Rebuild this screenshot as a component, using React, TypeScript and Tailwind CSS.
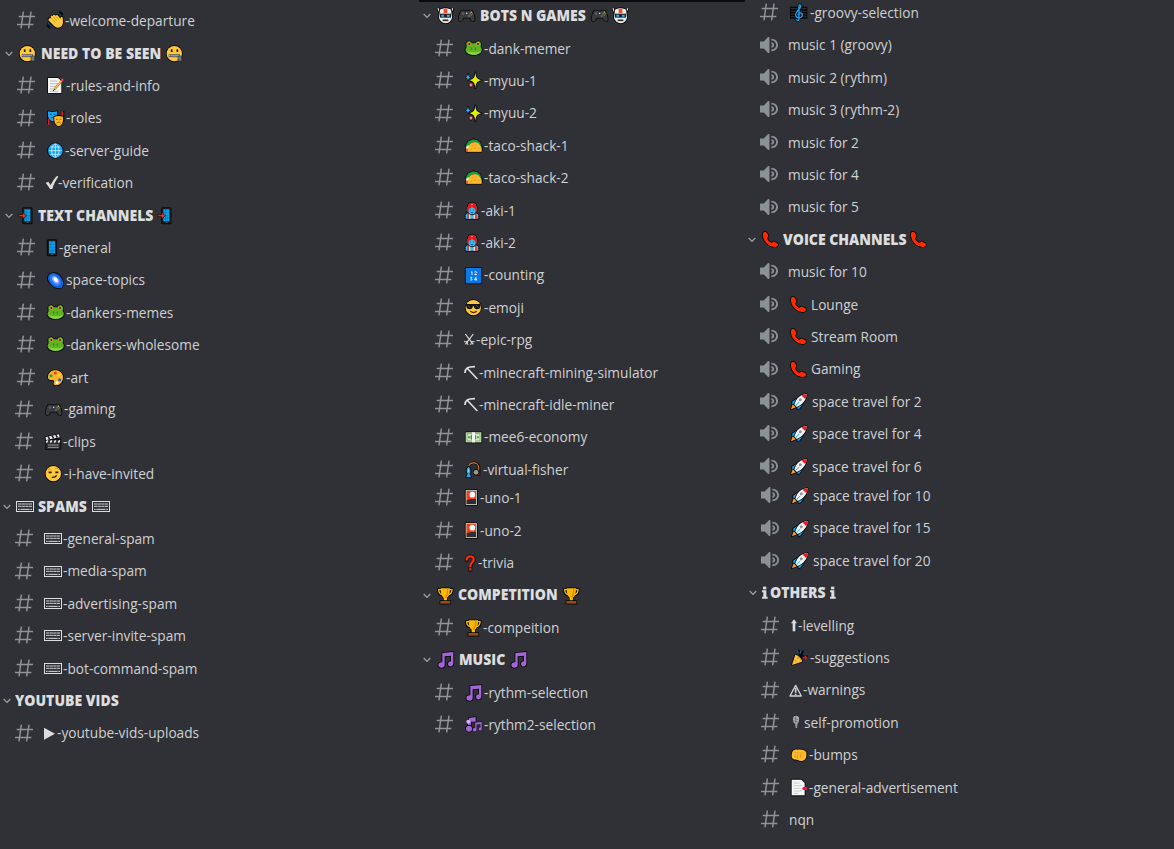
import React from "react";

const O = "#08080a";
const TXT = "#dcddde";

/* Every glyph is drawn on a 54-unit grid and shown 18px wide. */
const ol = { stroke: O, strokeWidth: 5, strokeLinejoin: "round" as const, strokeLinecap: "round" as const, paintOrder: "stroke" as const };

const Frog = () => (
  <g>
    <path {...ol} d="M4 12C4 6 9 3 13 4c4 0 6 3 7 6h12c1-3 3-6 7-6 4-1 9 2 9 8l-1 9c3 4 4 8 3 12-3 8-13 12-24 12S5 41 2 33c-1-4 0-8 3-12z" fill="#5fb321" />
    <path d="M4 33c8 5 36 5 44 0-3 7-12 11-22 11S7 40 4 33z" fill="#8bd448" />
    <circle cx="13" cy="12" r="5.5" fill="#f0a020" /><circle cx="39" cy="12" r="5.5" fill="#f0a020" />
    <circle cx="13" cy="12" r="3" fill="#1a1a1a" /><circle cx="39" cy="12" r="3" fill="#1a1a1a" />
    <path d="M20 23v6M31 23v6" stroke="#2c7a1c" strokeWidth="3" />
  </g>
);

const Pad = () => (
  <g>
    <path {...ol} d="M10 12c5-3 9-1 12 1h8c3-2 7-4 12-1 4 3 8 18 8 25 0 6-7 8-11 1l-4-6H17l-4 6C9 45 2 43 2 37c0-7 4-22 8-25z" fill="#3b3b3d" />
    <circle cx="15" cy="20" r="4" fill="#5c5c60" /><circle cx="33" cy="27" r="4" fill="#5c5c60" />
    <rect x="24" y="17" width="4" height="4" fill="#cfcfcf" />
    <circle cx="40" cy="16" r="2.4" fill="#e0b020" /><circle cx="44" cy="20" r="2.4" fill="#e03a20" />
    <circle cx="36" cy="20" r="2.4" fill="#1d87d8" /><circle cx="40" cy="24" r="2.4" fill="#25a35a" />
  </g>
);

const Face = ({ children }: { children: React.ReactNode }) => (
  <g><circle {...ol} cx="25" cy="26" r="23" fill="#ffc83d" />{children}</g>
);

const Phone = () => (
  <path {...ol} d="M3 7c2-5 9-6 12-1l4 8c1 4-3 5-4 8 2 6 7 11 13 14 3-1 5-6 9-4l9 5c4 3 2 9-3 10C25 52 0 32 3 7z" fill="#ff2a00" />
);

const Trophy = () => (
  <g>
    <path d="M12 8H4c0 10 4 15 11 16M38 8h8c0 10-4 15-11 16" stroke={O} strokeWidth="8" fill="none" />
    <path {...ol} d="M11 4h28c0 14-2 24-9 28v9h-10v-9C13 28 11 18 11 4z" fill="#fdb900" />
    <path d="M12 8H5c0 9 4 13 10 15M38 8h7c0 9-4 13-10 15" stroke="#fdb900" strokeWidth="4" fill="none" />
    <path d="M32 5c0 12-1 22-7 26" stroke="#d98a00" strokeWidth="4" fill="none" />
    <rect {...ol} x="10" y="42" width="30" height="8" fill="#9a4a12" />
  </g>
);

const Mobile = ({ x = 2 }: { x?: number }) => (
  <g transform={`translate(${x} 0)`}>
    <rect {...ol} x="0" y="3" width="26" height="46" rx="2" fill="#1c1c1e" />
    <rect x="4" y="7" width="18" height="36" fill="#00a6f4" />
    <path d="M4 16h18M4 25h18M4 34h18M10 7v36M16 25v18" stroke="#0b6aa6" strokeWidth="1.6" />
    <path d="M10 46h7" stroke="#666" strokeWidth="2" />
  </g>
);

const Keyboard = () => (
  <g>
    <rect x="1.5" y="10.5" width="51" height="30" fill="none" stroke={TXT} strokeWidth="3" />
    <path d="M6 18h42M6 25h42" stroke={TXT} strokeWidth="2.8" strokeDasharray="10 .8" />
    <path d="M6 34h5M13 34h28M43 34h5" stroke={TXT} strokeWidth="3" />
  </g>
);

const Note = ({ s = 1, x = 0, y = 0 }: { s?: number; x?: number; y?: number }) => (
  <g transform={`translate(${x} ${y}) scale(${s})`}>
    <path {...ol} d="M16 6l33-3v34c0 12-16 12-16 2 0-6 5-8 9-8V14l-19 2v26c0 11-19 11-19 0 0-6 6-9 12-8z" fill="#a465d8" />
  </g>
);

const Taco = () => (
  <g>
    <path {...ol} d="M2 38C1 18 12 9 21 9c3-4 7-2 9 0 5-2 8 0 9 4 6 0 8 6 9 12l3 9-2 10H4z" fill="#1d9e3c" />
    <path d="M3 31l7-7 4 6-5 13H4z" fill="#f4f0e6" /><path d="M3 34l6 1v9H4z" fill="#e8402a" />
    <path d="M8 44C8 25 18 16 29 16c13 0 21 12 21 28z" fill="#fcb92c" />
    <path d="M20 15l4 4 4-5z" fill="#ef4a38" />
    <path d="M22 26h3M32 24h3M28 33h3M39 34h3M18 36h3" stroke="#d8860e" strokeWidth="3" />
  </g>
);

const Sparkles = () => (
  <g>
    <path {...ol} d="M31 1c1.500 15 4 21 19 24-15 2-17.500 10-19 24-1.500-14-4-22-19-24 15-3 17.500-9 19-24z" fill="#e2f000" />
    <path {...ol} strokeWidth={3} d="M9 5c1 6 2 9 7 11-5 2-6 5-7 11-1-6-2-9-7-11 5-2 6-5 7-11z" fill="#20b8ff" />
    <path {...ol} strokeWidth={3} d="M18 30c1 5 3 8 7 9-4 1-6 4-7 9-1-5-3-8-7-9 4-1 6-4 7-9z" fill="#ff7f9c" />
  </g>
);

const Genie = () => (
  <g>
    <path {...ol} d="M2 50V40c0-4 5-6 9-6h20c5 0 9 2 9 6v10z" fill="#2fc3f4" />
    <path d="M6 50V38l6-3 2 15zM36 50V38l-6-3-2 15z" fill="#f33238" />
    <path d="M12 50V36h4v14zM26 50V36h4v14z" fill="#f4e8c0" />
    <path {...ol} d="M8 20C8 8 13 2 21 2s14 6 14 18c0 9-6 17-14 17S8 29 8 20z" fill="#2fc3f4" />
    <path d="M8 22C7 8 13 2 21 2s15 6 14 20c-5 0-10-4-14-7-4 3-9 7-13 7z" fill="#ef1320" />
    <path d="M9 15v16M33 15v16" stroke="#ef1320" strokeWidth="3.5" />
    <circle cx="21" cy="8" r="2" fill="#ffc83d" />
    <path d="M16 22v3M26 22v3M17 31h8" stroke="#0a3f66" strokeWidth="2.6" />
  </g>
);

const Card = () => (
  <g>
    <rect {...ol} x="2" y="3" width="34" height="45" rx="1" fill="#b9b9b9" />
    <rect x="5" y="6" width="28" height="39" fill="#ff3a12" />
    <circle cx="22" cy="17" r="8.5" fill="#fff" />
    <path d="M5 34c8-4 18-5 28-4v15H5z" fill="#2e2e2e" />
  </g>
);

const Rocket = () => (
  <g>
    <path {...ol} d="M3 49l5-16 10 10z" fill="#ff9a1a" />
    <path {...ol} d="M6 27l12-9 20 15-9 13-6 3-2-10-6-6-8-1z" fill="#12a2f2" />
    <path {...ol} d="M13 35C18 16 32 4 50 3c0 17-12 31-30 39z" fill="#f3f3f3" />
    <path d="M35 8c5-3 10-4 15-5 0 6-1 11-4 15z" fill="#f7111d" />
    <circle cx="31" cy="20" r="4.5" fill="#8f959c" />
    <path d="M16 38l12-11" stroke="#12a2f2" strokeWidth="3" />
  </g>
);

const InfoMark = () => (
  <g fill={TXT}><rect x="3" y="8" width="10" height="8" /><path d="M0 19h13v19h4v6H0v-6h4V25H0z" /></g>
);

const Pick = () => (
  <g fill="none" stroke={TXT}>
    <path d="M3 27C3 14 9 8 33 8" strokeWidth="5" /><path d="M9 12l31 33" strokeWidth="5" />
  </g>
);

const icons: Record<string, React.ReactNode> = {
  wave: (
    <g>
      <path d="M32 4c5 0 9 4 11 8M36 0c5 1 9 4 11 9M4 30c0 6 3 11 8 14M1 38c2 6 5 9 9 10" stroke={O} strokeWidth="6" fill="none" />
      <path {...ol} d="M6 20c2-4 5-2 7 0l-2-6c0-4 5-4 7-1-1-5 5-6 8-2 2-3 6-2 8 1l6 8c0-6 6-8 7-3 1 7 2 16-1 22-5 9-17 11-24 4L7 28c-3-3-3-6-1-8z" fill="#ffc83d" />
      <path d="M13 20l11 11M18 14l11 12M26 12l9 11" stroke="#d99410" strokeWidth="2.4" />
      <path d="M32 4c5 0 8 3 10 7M4 31c1 6 3 9 8 12" stroke="#0f7fb4" strokeWidth="3" fill="none" />
    </g>
  ),
  zip: (
    <Face>
      <path d="M17 13v8M34 13v8" stroke="#2a1c08" strokeWidth="5" />
      <path d="M8 32h34" stroke="#5d6168" strokeWidth="9" /><path d="M9 32h32" stroke="#c2c6ca" strokeWidth="3" strokeDasharray="4 2.4" />
      <rect x="36" y="33" width="11" height="15" rx="3" fill="#777b80" stroke="#303236" strokeWidth="2" />
    </Face>
  ),
  memo: (
    <g>
      <path {...ol} d="M3 3h30l10 9v36H3z" fill="#f4f4f4" />
      <path d="M9 12h22M9 20h26M9 28h20M9 36h12M9 43h24" stroke="#b4b4b4" strokeWidth="2.5" />
      <path d="M45 10L23 36" stroke="#6b5a35" strokeWidth="6" /><path d="M45 10L23 36" stroke="#ffc02e" strokeWidth="4.500" />
      <path d="M48 6l-5 6" stroke="#f0334a" strokeWidth="7" /><path d="M23 36l-4 6" stroke="#333" strokeWidth="3" />
    </g>
  ),
  masks: (
    <g>
      <path d="M4 6v36M48 3v32" stroke={O} strokeWidth="8" /><path d="M5 24v20M46 4v26" stroke="#f01828" strokeWidth="5" />
      <path {...ol} d="M3 4c9 3 18 3 27 0 1 16 0 26-13 30C4 30 2 20 3 4z" fill="#18a7f2" />
      <path d="M9 13h5M20 13h5" stroke="#07486e" strokeWidth="3" /><path d="M10 22c4 4 9 4 13 0z" fill="#0b3550" />
      <path {...ol} d="M22 20c9-3 17-3 26 0 1 15-1 24-13 29-12-5-14-15-13-29z" fill="#fbb623" />
      <path d="M27 28h5M38 28h5M29 40c4-5 8-5 12 0" stroke="#8a5208" strokeWidth="2.6" fill="none" />
    </g>
  ),
  globe: (
    <g>
      <circle {...ol} cx="25" cy="26" r="22" fill="#08a4f5" />
      <g fill="none" stroke="#d7f2ff" strokeWidth="2.4"><path d="M25 6v40M6 26h38M10 15h30M10 37h30" /><ellipse cx="25" cy="26" rx="11" ry="20" /></g>
    </g>
  ),
  check: <path d="M-1 27l8-4 7 10C20 21 26 11 34 5l3 3C30 18 23 30 19 45h-7C8 38 4 32-1 27z" fill={TXT} />,
  arrowphone: (
    <g><Mobile x={12} /><path d="M-1 23h12v-7l11 10-11 10v-7H-1z" fill="#f03a17" stroke={O} strokeWidth="2" /></g>
  ),
  mobile: <Mobile />,
  galaxy: (
    <g>
      <path {...ol} d="M4 12C9 0 27 0 38 11c12 13 14 28 6 36-8 5-25 0-34-12C3 27 1 18 4 12z" fill="#0f5fd8" />
      <ellipse cx="25" cy="25" rx="20" ry="13" transform="rotate(48 25 25)" fill="#1f86f5" />
      <ellipse cx="26" cy="24" rx="13" ry="8" transform="rotate(48 26 24)" fill="#a9a4ff" />
      <ellipse cx="26" cy="23" rx="8" ry="5" transform="rotate(48 26 23)" fill="#fff" />
    </g>
  ),
  frog: <Frog />,
  palette: (
    <g>
      <path {...ol} d="M3 25C3 12 13 4 25 4s23 8 23 21c0 14-9 24-21 24-7 0-9-4-6-9 2-5-1-8-6-7C7 34 3 32 3 25z" fill="#fdb32a" />
      <circle cx="25" cy="12" r="4.5" fill="#f03a28" /><circle cx="12" cy="20" r="4.5" fill="#14a04a" />
      <circle cx="37" cy="17" r="4" fill="#f7e01f" /><circle cx="38" cy="32" r="4.5" fill="#1766e0" /><circle cx="30" cy="41" r="4" fill="#fff" />
    </g>
  ),
  pad: <Pad />,
  clap: (
    <g>
      <rect {...ol} x="3" y="20" width="43" height="28" fill="#2d2d2f" />
      <path {...ol} d="M2 12L42 4l2 9-41 8z" fill="#efefef" />
      <path d="M9 10l5 9M21 8l5 8M33 6l4 8" stroke="#222" strokeWidth="5" />
      <path d="M8 22l-4 7M20 22l-4 7M32 22l-4 7M44 22l-4 7" stroke="#efefef" strokeWidth="5" />
      <path d="M9 36h32M9 43h32" stroke="#9a9a9a" strokeWidth="3" />
    </g>
  ),
  smirk: (
    <Face>
      <path d="M9 15c4-3 7-3 10-1M30 12c4-3 8-2 10 1" stroke="#c98a1a" strokeWidth="2.5" fill="none" />
      <path d="M11 22h9M31 22h9" stroke="#2a1c08" strokeWidth="5" />
      <path d="M20 37c7 1 12-1 15-6" stroke="#2a1c08" strokeWidth="4" fill="none" />
    </Face>
  ),
  keyboard: <Keyboard />,
  play: <path d="M0 8l33 18L0 44z" fill={TXT} />,
  robot: (
    <g>
      <path d="M3 3l6 15M48 3l-6 15" stroke={O} strokeWidth="9" /><path d="M3 4l6 14M47 4l-6 14" stroke="#e8e8e8" strokeWidth="4" />
      <path {...ol} d="M9 8c9-6 24-6 33 0l3 24c-2 9-8 16-19 17C15 48 8 41 6 32z" fill="#ececec" />
      <rect x="20" y="5" width="11" height="13" fill="#f04e28" />
      <path d="M9 20h33v12H9z" fill="#202326" /><path d="M13 26h8M30 26h8" stroke="#24b8ff" strokeWidth="6" />
      <path d="M17 40h17" stroke="#2a2a2a" strokeWidth="5" />
    </g>
  ),
  sparkles: <Sparkles />,
  taco: <Taco />,
  genie: <Genie />,
  numbers: (
    <g>
      <rect {...ol} x="2" y="3" width="47" height="46" fill="#0a78e6" />
      <g fill="none" stroke="#fff" strokeWidth="2.4">
        <path d="M18 16l3-2v10M29 16c0-3 6-3 6 0 0 3-5 4-6 7h7M16 31h5l-3 4c5 0 4 6-2 4M33 41V31l-5 7h8" />
      </g>
    </g>
  ),
  cool: (
    <Face>
      <path d="M3 15h44v3c-1 10-4 13-11 13-6 0-9-4-10-10h-2c-1 6-4 10-10 10C8 31 4 28 3 18z" fill="#151515" />
      <path d="M9 19l6 7M34 19l6 7" stroke="#55595e" strokeWidth="3" />
      <path d="M16 37c6 5 13 5 19 0" stroke="#4a2c06" strokeWidth="4" fill="none" />
    </Face>
  ),
  swords: (
    <g fill="none" stroke={TXT} strokeWidth="3.6">
      <path d="M4 9l24 31M28 9L4 40" /><path d="M0 32h9l3 10M32 32h-9l-3 10" strokeWidth="3" />
    </g>
  ),
  pick: <Pick />,
  cash: (
    <g>
      <rect {...ol} x="2" y="10" width="47" height="30" fill="#d8e8c4" />
      <rect x="6" y="14" width="39" height="22" fill="none" stroke="#6aac62" strokeWidth="2.6" />
      <circle cx="25" cy="25" r="9" fill="#4f9a4a" /><rect x="21" y="10" width="9" height="30" fill="#f4f4ee" />
      <path d="M12 22v6M39 22v6" stroke="#2f7d38" strokeWidth="4" />
    </g>
  ),
  rod: (
    <g>
      <path d="M11 22C11 0 42 0 42 20v24" stroke={O} strokeWidth="8" fill="none" />
      <path d="M11 20C12 1 41 1 41 20v22" stroke="#e07a1c" strokeWidth="3.4" fill="none" />
      <path {...ol} d="M11 17c6 5 7 14 3 21l4 10H4l4-10c-5-8-4-16 3-21z" fill="#1fa8f5" />
      <path d="M10 24v10" stroke="#a8e4ff" strokeWidth="3" />
      <circle {...ol} cx="33" cy="34" r="7" fill="#9b9b9b" />
    </g>
  ),
  card: <Card />,
  question: (
    <g fill="none" strokeLinecap="square">
      <path d="M5 17C5 4 27 4 27 17c0 9-10 9-10 19" stroke={O} strokeWidth="11" /><path d="M16 47v.2" stroke={O} strokeWidth="11" />
      <path d="M5 16C6 4 27 4 26 17c0 8-10 8-10 19" stroke="#ff2d0c" strokeWidth="7" /><path d="M16 46v.2" stroke="#ff2d0c" strokeWidth="7" />
    </g>
  ),
  trophy: <Trophy />,
  note: <Note />,
  notes: (
    <g>
      <path {...ol} d="M12 6l20-3v14H18v24H8V31z" fill="#a465d8" />
      <circle {...ol} cx="12" cy="38" r="9" fill="#a465d8" />
      <Note s={0.6} x={21} y={16} /><circle cx="10" cy="17" r="6" fill="#d7b0f5" />
    </g>
  ),
  score: (
    <g>
      <rect x="0" y="8" width="52" height="36" fill={O} />
      <path d="M3 14h46M3 22h46M3 30h46M3 38h46" stroke="#4a4d50" strokeWidth="2" />
      <path d="M27 47V7c0-8 8-4 4 3-4 7-14 13-14 22 0 12 20 12 20 1 0-9-14-8-12 1M27 46c0 5-7 5-7 0" stroke={O} strokeWidth="8" fill="none" />
      <path d="M27 47V7c0-8 8-4 4 3-4 7-14 13-14 22 0 12 20 12 20 1 0-9-14-8-12 1M27 46c0 5-7 5-7 0" stroke="#18a8f8" strokeWidth="4" fill="none" />
    </g>
  ),
  phone: <Phone />,
  rocket: <Rocket />,
  info: <InfoMark />,
  up: <path d="M9 7l9 12h-5v24H5V19H0z" fill={TXT} />,
  party: (
    <g>
      <path d="M20 4l9 12M34 4l-6 20M30 26c6-3 10-5 20-2" stroke={O} strokeWidth="9" fill="none" />
      <path {...ol} d="M3 48L13 17c8 2 18 12 20 21z" fill="#fdc235" />
      <path d="M14 18c8 3 14 9 18 18" stroke="#e89a12" strokeWidth="3" fill="none" />
      <path d="M18 4l5 9M31 4l-4 10" stroke="#125f8c" strokeWidth="4" /><path d="M35 26h14M43 19l2 12" stroke="#c42424" strokeWidth="5" />
      <path d="M12 36h3M19 28h3" stroke="#2a8fd8" strokeWidth="3.5" />
    </g>
  ),
  warn: (
    <g fill="none" stroke="#cfd0d2"><path d="M20 10L37 42H3z" strokeWidth="4" strokeLinejoin="round" /><path d="M20 18v14M20 35v4" strokeWidth="5" /></g>
  ),
  mic: (
    <g><path d="M3 11c2-8 16-8 18 0 1 8-1 14-4 18H8C4 25 2 19 3 11z" fill="#a8aaad" />
      <path d="M5 13l13 4M5 20l13 4M11 7v20" stroke="#5c5f64" strokeWidth="1.8" /><path d="M9 28h8l-2 14h-4z" fill="#96989c" /></g>
  ),
  fist: (
    <g>
      <path {...ol} d="M5 16c2-4 8-6 14-5 8-1 15 0 20 2 7 3 8 8 7 17-1 9-5 13-11 14-5 2-11 1-14-2C9 42 2 39 2 31c0-5 1-11 3-15z" fill="#fdbb2d" />
      <path d="M12 23v13M20 24v14M29 23v14" stroke="#d98f13" strokeWidth="2.2" /><path d="M9 18c12 4 22 2 30 2" stroke="#e8a21a" strokeWidth="2.4" fill="none" />
    </g>
  ),
  tabs: (
    <g>
      <path {...ol} d="M2 2h29l10 10v37H2z" fill="#f6f6f6" />
      <path d="M8 12h18M8 20h24M8 28h20M8 36h24M8 43h14" stroke="#c2c2c2" strokeWidth="2.4" />
      <path d="M36 24h12v9H36l-3-4z" fill="#f0174f" />
    </g>
  ),
};

const Icon = ({ name }: { name: string }) => (
  <svg viewBox="0 0 54 54" className="mt-px block h-[18px] w-[18px] shrink-0 overflow-visible" aria-hidden>{icons[name]}</svg>
);

const Hash = () => (
  <svg viewBox="0 0 54 54" className="block h-[18px] w-[18px] shrink-0" fill="none" stroke="#8f9498" strokeWidth="4.4">
    <path d="M19 2L12 52M42 2l-7 50M5 16.5h49M0 40.5h49" />
  </svg>
);

const Speaker = () => (
  <svg viewBox="2 3 19 18" preserveAspectRatio="none" className="-ml-[0.5px] block h-4 w-[18px] shrink-0" fill="#8b9296">
    <path d="M11.383 3.079C11.009 2.925 10.579 3.01 10.293 3.296L6 8.002H2V16.002H6L10.293 20.71C10.579 20.996 11.009 21.082 11.383 20.927C11.757 20.772 12 20.407 12 20.002V4.002C12 3.599 11.757 3.232 11.383 3.079ZM14 5.002V7.002C16.757 7.002 19 9.246 19 12.002C19 14.759 16.757 17.002 14 17.002V19.002C17.86 19.002 21 15.863 21 12.002C21 8.143 17.86 5.002 14 5.002ZM14 9.002C15.654 9.002 17 10.349 17 12.002C17 13.657 15.654 15.002 14 15.002V13.002C14.551 13.002 15 12.553 15 12.002C15 11.451 14.551 11.002 14 11.002V9.002Z" />
  </svg>
);

/* Slot widths: distance from the glyph's left edge to the label. */
type Row = { k?: "#" | "v" | "c"; i?: string; slot?: string; t: string; w?: string; i2?: string; pre?: string; post?: string };

const Channel = ({ r }: { r: Row }) => (
  <li className="flex h-[32.42px] items-center pl-3">
    <div className="-mt-px">{r.k === "v" ? <Speaker /> : <Hash />}</div>
    <div className={`flex items-center ${r.i ? "pl-3" : r.k === "v" ? "pl-[10.5px]" : "pl-[9.5px]"}`}>
      {r.i && <span className={`shrink-0 ${r.slot ?? "w-[19px]"}`}><Icon name={r.i} /></span>}
      <span className="-mt-[1.4px] inline-block origin-left scale-x-[0.912] whitespace-pre text-[15px] leading-5 text-[#cfd0d2]">{r.t}</span>
    </div>
  </li>
);

const Category = ({ r }: { r: Row }) => (
  <li className="flex h-[32.42px] items-center">
    <svg viewBox="0 0 8 6" className="-ml-[0.5px] mt-px block h-[6px] w-2 shrink-0" fill="none" stroke="#9a9da1" strokeWidth="1.3"><path d="M.7 1L4 4.4 7.3 1" /></svg>
    <div className={`flex items-center ${r.i ? "pl-[6px]" : "pl-[4.5px]"}`}>
      {r.pre && <span className="w-[21px] shrink-0"><Icon name={r.pre} /></span>}
      {r.i && <span className={`shrink-0 ${r.slot ?? "w-[22px]"}`}><Icon name={r.i} /></span>}
      <span className={`-mt-[1.4px] shrink-0 ${r.w ?? ""}`}>
        <span className="inline-block origin-left scale-x-[0.935] whitespace-pre text-[15px] font-extrabold leading-5 text-[#dcddde]">{r.t}</span>
      </span>
      {r.i2 && <Icon name={r.i2} />}
      {r.post && <span className="pl-[3px]"><Icon name={r.post} /></span>}
    </div>
  </li>
);

const Section = ({ rows, className }: { rows: Row[]; className: string }) => (
  <ul className={className}>{rows.map((r, n) => (r.k === "c" ? <Category key={n} r={r} /> : <Channel key={n} r={r} />))}</ul>
);

const leftTop: Row[] = [
  { i: "wave", slot: "w-[18px]", t: "-welcome-departure" },
  { k: "c", i: "zip", slot: "w-[22px]", t: "NEED TO BE SEEN", w: "w-[125.5px]", i2: "zip" },
  { i: "memo", t: "-rules-and-info" },
  { i: "masks", t: "-roles" },
  { i: "globe", slot: "w-[18px]", t: "-server-guide" },
  { i: "check", slot: "w-[12px] -ml-px", t: "-verification" },
  { k: "c", i: "arrowphone", slot: "w-[19px]", t: "TEXT CHANNELS", w: "w-[120px]", i2: "arrowphone" },
  { i: "mobile", slot: "w-[12px]", t: "-general" },
  { i: "galaxy", t: "space-topics" },
  { i: "frog", t: "-dankers-memes" },
  { i: "frog", t: "-dankers-wholesome" },
  { i: "palette", t: "-art" },
];
const leftBottom: Row[] = [
  { i: "pad", t: "-gaming" },
  { i: "clap", slot: "w-[18px]", t: "-clips" },
  { i: "smirk", t: "-i-have-invited" },
  { k: "c", i: "keyboard", slot: "w-[22px] -ml-px", t: "SPAMS", w: "w-[54px]", i2: "keyboard" },
  { i: "keyboard", slot: "w-[19px] -ml-px", t: "-general-spam" },
  { i: "keyboard", slot: "w-[19px] -ml-px", t: "-media-spam" },
  { i: "keyboard", slot: "w-[19px] -ml-px", t: "-advertising-spam" },
  { i: "keyboard", slot: "w-[19px] -ml-px", t: "-server-invite-spam" },
  { i: "keyboard", slot: "w-[19px] -ml-px", t: "-bot-command-spam" },
  { k: "c", t: "YOUTUBE VIDS" },
  { i: "play", slot: "w-[13px] -ml-px", t: "-youtube-vids-uploads" },
];
const midTop: Row[] = [
  { k: "c", pre: "robot", i: "pad", t: "BOTS N GAMES", w: "w-[111px]", i2: "pad", post: "robot" },
  { i: "frog", t: "-dank-memer" },
  { i: "sparkles", t: "-myuu-1" },
  { i: "sparkles", t: "-myuu-2" },
  { i: "taco", t: "-taco-shack-1" },
  { i: "taco", t: "-taco-shack-2" },
  { i: "genie", slot: "w-4", t: "-aki-1" },
  { i: "genie", slot: "w-4", t: "-aki-2" },
  { i: "numbers", t: "-counting" },
  { i: "cool", t: "-emoji" },
  { i: "swords", slot: "w-[11.5px] -ml-px", t: "-epic-rpg" },
  { i: "pick", slot: "w-[14.5px] -ml-px", t: "-minecraft-mining-simulator" },
  { i: "pick", slot: "w-[14.5px] -ml-px", t: "-minecraft-idle-miner" },
  { i: "cash", t: "-mee6-economy" },
  { i: "rod", slot: "w-[17.5px]", t: "-virtual-fisher" },
];
const midBottom: Row[] = [
  { i: "card", slot: "w-[14.5px]", t: "-uno-1" },
  { i: "card", slot: "w-[14.5px]", t: "-uno-2" },
  { i: "question", slot: "w-[13px]", t: "-trivia" },
  { k: "c", i: "trophy", slot: "w-[21px]", t: "COMPETITION", w: "w-[105px]", i2: "trophy" },
  { i: "trophy", slot: "w-[18px]", t: "-compeition" },
  { k: "c", i: "note", t: "MUSIC", w: "w-[51px]", i2: "note" },
  { i: "note", t: "-rythm-selection" },
  { i: "notes", t: "-rythm2-selection" },
];
const rightTop: Row[] = [
  { i: "score", slot: "w-[19.5px]", t: "-groovy-selection" },
  { k: "v", t: "music 1 (groovy)" },
  { k: "v", t: "music 2 (rythm)" },
  { k: "v", t: "music 3 (rythm-2)" },
  { k: "v", t: "music for 2" },
  { k: "v", t: "music for 4" },
  { k: "v", t: "music for 5" },
  { k: "c", i: "phone", slot: "w-[21.5px]", t: "VOICE CHANNELS", w: "w-[127px]", i2: "phone" },
  { k: "v", t: "music for 10" },
  { k: "v", i: "phone", slot: "w-[21px]", t: "Lounge" },
  { k: "v", i: "phone", slot: "w-[21px]", t: "Stream Room" },
  { k: "v", i: "phone", slot: "w-[21px]", t: "Gaming" },
  { k: "v", i: "rocket", slot: "w-[22px]", t: "space travel for 2" },
  { k: "v", i: "rocket", slot: "w-[22px]", t: "space travel for 4" },
  { k: "v", i: "rocket", slot: "w-[22px]", t: "space travel for 6" },
];
const rightBottom: Row[] = [
  { k: "v", i: "rocket", slot: "w-[22px]", t: "space travel for 10" },
  { k: "v", i: "rocket", slot: "w-[22px]", t: "space travel for 15" },
  { k: "v", i: "rocket", slot: "w-[22px]", t: "space travel for 20" },
  { k: "c", i: "info", slot: "w-[8px] -ml-px", t: "OTHERS", w: "w-[60px]", i2: "info" },
  { i: "up", slot: "w-[7px]", t: "-levelling" },
  { i: "party", t: "-suggestions" },
  { i: "warn", slot: "w-[14px] -ml-[2px]", t: "-warnings" },
  { i: "mic", slot: "w-[13px] pl-px", t: "self-promotion" },
  { i: "fist", slot: "w-[18px]", t: "-bumps" },
  { i: "tabs", slot: "w-[18px]", t: "-general-advertisement" },
  { t: "nqn" },
];

export default function App() {
  return (
    <main className="flex h-[849px] w-[1174px] overflow-hidden bg-[#303136] font-['Open_Sans',sans-serif]">
      <div className="w-[419px] pt-[4.6px]">
        <Section rows={leftTop} className="pl-[5px]" />
        <Section rows={leftBottom} className="-mt-[0.6px] pl-[3px]" />
      </div>
      <div className="w-[326px] border-t-2 border-[#0c0c0e]">
        <Section rows={midTop} className="-mt-[2.3px] pl-1" />
        <Section rows={midBottom} className="-mt-[4.2px] pl-1" />
      </div>
      <div className="flex-1">
        <Section rows={rightTop} className="-mt-[3.6px] pl-[3px]" />
        <Section rows={rightBottom} className="-mt-[3px] pl-1" />
      </div>
    </main>
  );
}
